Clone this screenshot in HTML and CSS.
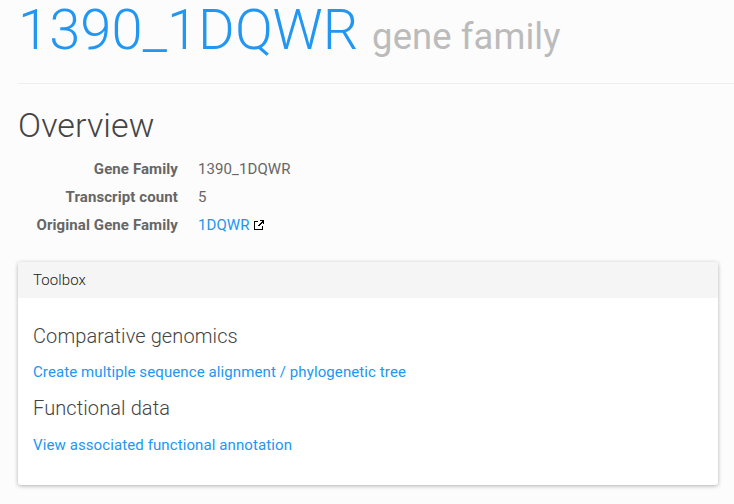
FILE: index.html
```html
<!DOCTYPE html>
<html lang="en">
<head>
<meta charset="utf-8">
<title>1390_1DQWR gene family</title>
<link rel="stylesheet" href="styles.css">
</head>
<body>
<header class="page-header">
  <h1>1390_1DQWR <small>gene family</small></h1>
</header>
<main>
  <h3 class="section-title">Overview</h3>
  <dl class="details">
    <dt>Gene Family</dt><dd>1390_1DQWR</dd>
    <dt>Transcript count</dt><dd>5</dd>
    <dt>Original Gene Family</dt>
    <dd><a href="#">1DQWR</a><svg class="external" viewBox="0 0 10 10" shape-rendering="crispEdges" aria-hidden="true"><path d="M0 1h4v1H1v7h7V6h1v4H0zM6 0h4v4H9V2H8V1H6zM7 2h1v1H7zM6 3h1v1H6zM5 4h1v1H5zM4 5h1v1H4zM8 1h1v1H8zM7 3h1v1H7zM6 4h1v1H6zM5 5h1v1H5zM8 2h1v1H8z" /></svg></dd>
  </dl>
  <section class="panel">
    <div class="panel-heading">Toolbox</div>
    <div class="panel-body">
      <h4>Comparative genomics</h4>
      <a class="tool" href="#">Create multiple sequence alignment / phylogenetic tree</a>
      <h4>Functional data</h4>
      <a class="tool last" href="#">View associated functional annotation</a>
    </div>
  </section>
</main>
</body>
</html>
```
FILE: styles.css
```css
* { box-sizing: border-box; }
body {
  margin: 0;
  height: 504px;
  overflow: hidden;
  background: #fcfcfc;
  color: #666;
  font: 15px/28px Roboto, sans-serif;
  letter-spacing: .1px;
}
a { color: #2196f3; text-decoration: none; }
h1, h3, h4 { margin: 0; font-weight: 300; color: #444; }
.page-header { height: 84px; margin-left: 18px; border-bottom: 1px solid #eee; }
h1 { font-size: 56px; line-height: 60px; color: #2196f3; white-space: nowrap; }
h1 small { font-size: 36.4px; font-weight: 400; color: #bbb; }
main { padding: 23px 16px 0 18px; }
.section-title { font-size: 34px; line-height: 37px; }
.details {
  display: grid;
  grid-template-columns: 160px 1fr;
  column-gap: 20px;
  margin: 11px 0 23px;
}
.details dt { font-weight: 700; text-align: right; }
.details dd { margin: 0; }
.external { width: 10px; height: 10px; margin-left: 4px; fill: #000; vertical-align: 0; }
.panel { height: 223px; background: #fff; border-radius: 3px; overflow: hidden; box-shadow: 0 1px 4px rgba(0,0,0,.3); }
.panel-heading { height: 36px; padding: 0 15px; line-height: 36px; background: #f5f5f5; color: #212121; font-weight: 300; }
.panel-body { padding: 26px 15px; }
h4 { font-size: 20px; line-height: 24px; }
.tool { display: block; line-height: 24px; margin: 12px 0; }
.tool.last { margin-top: 13px; }
```
